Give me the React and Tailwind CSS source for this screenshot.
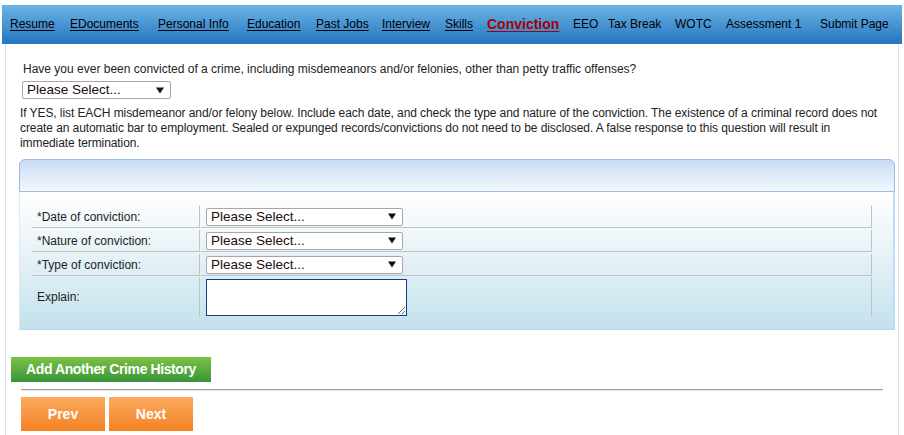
import React from "react";

const navItems = [
  { label: "Resume", w: 60, link: true },
  { label: "EDocuments", w: 88, link: true },
  { label: "Personal Info", w: 89, link: true },
  { label: "Education", w: 69, link: true },
  { label: "Past Jobs", w: 66, link: true },
  { label: "Interview", w: 63, link: true },
  { label: "Skills", w: 42, link: true },
  { label: "Conviction", w: 86, active: true },
  { label: "EEO", w: 35 },
  { label: "Tax Break", w: 67 },
  { label: "WOTC", w: 51 },
  { label: "Assessment 1", w: 94 },
  { label: "Submit Page", w: 70 },
];

function Arrow() {
  return (
    <svg width="8" height="7" viewBox="0 0 8 7" className="shrink-0">
      <path d="M0 0.5 L8 0.5 L4 6.5 Z" fill="#111" />
    </svg>
  );
}

function FakeSelect({ className }) {
  return (
    <div
      className={
        "flex items-center justify-between bg-white border border-[#a6a6a6] rounded-[2px] pl-[4px] pr-[6px] " +
        className
      }
    >
      <span className="text-[13.5px] leading-[16px] text-[#1a0a0a] font-['Liberation_Sans',Arial,sans-serif]">
        Please Select...
      </span>
      <Arrow />
    </div>
  );
}

function Row({ label, children, last }) {
  return (
    <div className="flex gap-[1px]">
      <div
        className={
          "w-[168px] flex items-center pl-[5px] border-r border-[#c2c2c2] " +
          (last ? "h-[38px]" : "h-[22px] border-b")
        }
      >
        <span className="text-[12px] text-[#222]">{label}</span>
      </div>
      <div
        className={
          "flex-1 flex items-center pl-[5px] border-r border-[#c2c2c2] " +
          (last ? "h-[38px]" : "h-[22px] border-b")
        }
      >
        {children}
      </div>
    </div>
  );
}

export default function App() {
  return (
    <div className="bg-white w-[904px] h-[435px] overflow-hidden pt-[5px] font-['Liberation_Sans',Arial,sans-serif] text-[#222]">
      {/* nav */}
      <div className="mx-[2px] h-[39px] bg-gradient-to-b from-[#6ab5e6] to-[#2474bf] flex items-center pl-[8px] pb-[1px]">
        {navItems.map((it) => (
          <div key={it.label} style={{ width: it.w }} className="shrink-0 flex items-center">
            {it.active ? (
              <span className="text-[14px] font-bold text-[#a80000] underline underline-offset-2 whitespace-nowrap">
                {it.label}
              </span>
            ) : (
              <span
                className={
                  "text-[12px] text-black whitespace-nowrap " +
                  (it.link ? "underline underline-offset-2" : "")
                }
              >
                {it.label}
              </span>
            )}
          </div>
        ))}
      </div>

      {/* container */}
      <div className="ml-[5px] w-[894px] h-[400px] border-x border-[#d2e4f7]">
        <div className="pt-[18px] pl-[17px] text-[12px] leading-[15px] whitespace-nowrap">
          Have you ever been convicted of a crime, including misdemeanors and/or felonies, other than petty traffic offenses?
        </div>
        <FakeSelect className="ml-[16px] mt-[4px] w-[149px] h-[18px]" />
        <div className="mt-[7px] pl-[14px] text-[12px] leading-[15px] whitespace-nowrap tracking-[-0.08px]">
          If YES, list EACH misdemeanor and/or felony below. Include each date, and check the type and nature of the conviction. The existence of a criminal record does not
          <br />
          create an automatic bar to employment. Sealed or expunged records/convictions do not need to be disclosed. A false response to this question will result in
          <br />
          immediate termination.
        </div>

        {/* panel */}
        <div className="mt-[8px] ml-[13px] w-[876px]">
          <div className="h-[33px] rounded-t-[6px] border border-[#9dbbe3] bg-gradient-to-b from-[#c8dbf5] to-[#f3f8fd]" />
          <div className="border-l border-r-2 border-b border-l-[#dcebf8] border-r-[#bcdcfb] border-b-[#b3d6f5] bg-gradient-to-b from-white via-[#e4f1f6] to-[#c3e1ec] pt-[14px] pb-[13px] pl-[12px] pr-[21px]">
            <div className="flex flex-col gap-[2px]">
              <Row label="*Date of conviction:">
                <FakeSelect className="w-[197px] h-[18px]" />
              </Row>
              <Row label="*Nature of conviction:">
                <FakeSelect className="w-[197px] h-[18px]" />
              </Row>
              <Row label="*Type of conviction:">
                <FakeSelect className="w-[197px] h-[18px]" />
              </Row>
              <Row label="Explain:" last>
                <textarea className="w-[201px] h-[37px] border border-[#123d90] bg-white outline-none resize" />
              </Row>
            </div>
          </div>
        </div>

        {/* green button */}
        <div className="mt-[27px] ml-[5px] w-[200px] h-[25px] bg-gradient-to-b from-[#7cc244] to-[#36943a] flex items-center justify-center">
          <span className="text-white font-bold text-[14px] tracking-[-0.4px] font-['Liberation_Sans',Arial,sans-serif]">
            Add Another Crime History
          </span>
        </div>

        <div className="mt-[7px] ml-[15px] w-[862px] border-t border-t-[#9f9f9f] border-b border-b-[#e4e4e4]" />

        <div className="mt-[6px] ml-[15px] flex gap-[4px]">
          <div className="w-[84px] h-[34px] bg-gradient-to-b from-[#faaa5c] to-[#f5811f] flex items-center justify-center text-white font-bold text-[14px]">
            Prev
          </div>
          <div className="w-[84px] h-[34px] bg-gradient-to-b from-[#faaa5c] to-[#f5811f] flex items-center justify-center text-white font-bold text-[14px]">
            Next
          </div>
        </div>
      </div>
    </div>
  );
}
